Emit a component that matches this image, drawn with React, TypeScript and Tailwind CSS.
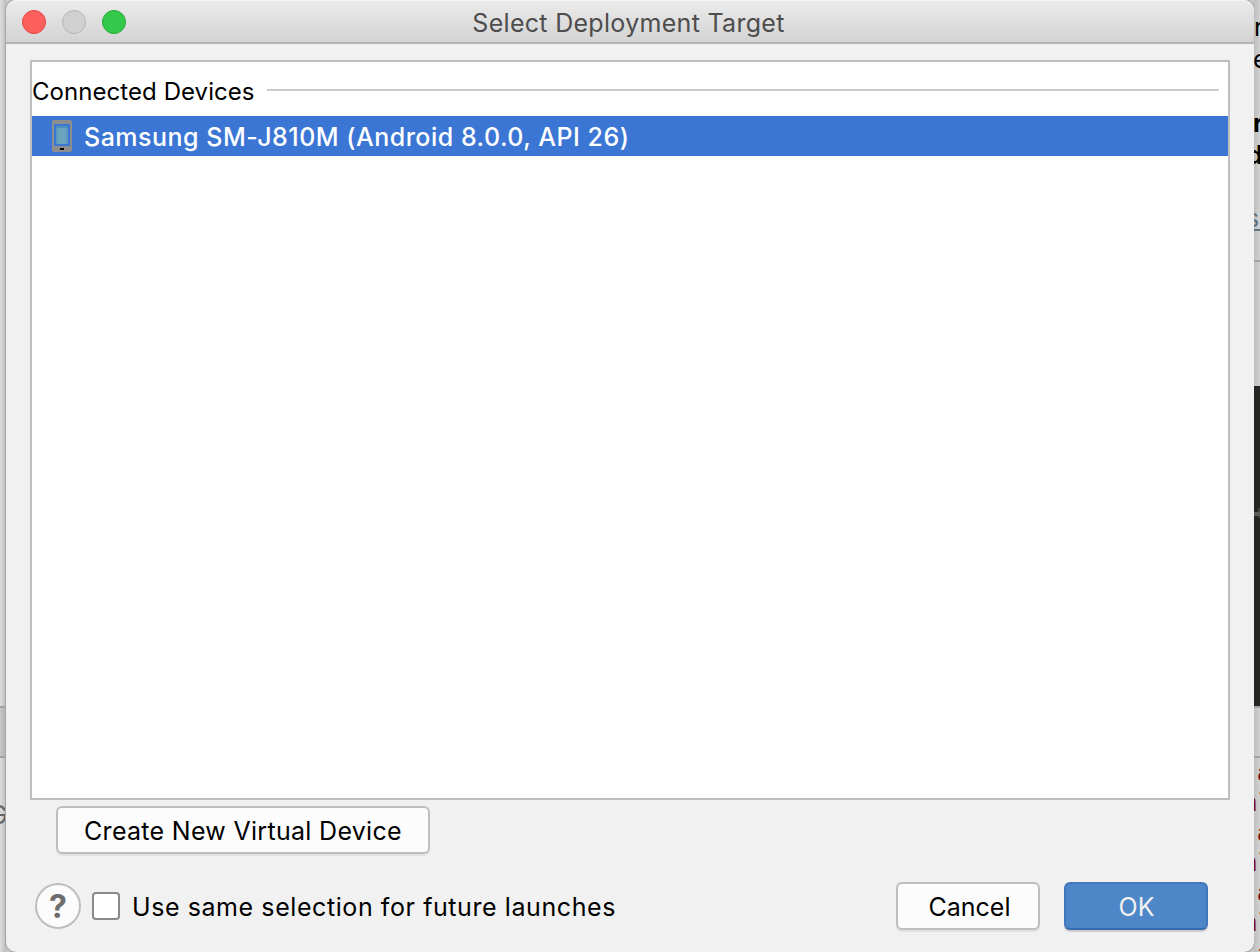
import type { ReactNode } from "react";

function TrafficLights() {
  return (
    <div className="flex w-[120px] gap-4 pl-4">
      <span className="size-6 rounded-full border border-[#e2443f] bg-[#fc605c]" />
      <span className="size-6 rounded-full border border-[#b4b4b4] bg-[#d0d0d0]" />
      <span className="size-6 rounded-full border border-[#27a737] bg-[#34c94a]" />
    </div>
  );
}

function PhoneIcon() {
  return (
    <svg width="20" height="32" viewBox="0 0 20 32" shapeRendering="crispEdges" className="shrink-0">
      <path fill="#8e8e8e" fillRule="evenodd" d="M1 0H19V1H20V31H19V32H1V31H0V1H1ZM2 4V26H18V4Z" />
      <rect x="4" y="6" width="12" height="18" fill="#4c8fbb" />
      <rect x="6" y="8" width="8" height="16" fill="#6ca4bf" />
      <rect x="4" y="8" width="2" height="16" fill="#5c9abf" />
      <rect x="14" y="8" width="2" height="16" fill="#5c9abf" />
      <rect x="8" y="28" width="4" height="2" fill="#000" />
    </svg>
  );
}

function Button({ className, children }: { className: string; children: ReactNode }) {
  return (
    <button
      className={`flex h-12 items-center justify-center rounded-[6px] border-2 whitespace-nowrap ${className}`}
    >
      {children}
    </button>
  );
}

function LeftBackdrop() {
  return (
    <div className="flex flex-col overflow-hidden bg-linear-to-r from-[#dedede] to-[#bdbdbd]">
      <div className="h-[706px] shrink-0" />
      <div className="h-[52px] shrink-0 border-y-2 border-[#a2a2a2] bg-linear-to-r from-[#c8c8c8] to-[#b0b0b0]" />
      <div className="-ml-[11px] mt-[44px] h-[26px] text-[25px] leading-[26px] text-[#666]">G</div>
    </div>
  );
}

function LogFragment() {
  return (
    <div className="h-[60px] shrink-0 font-['Liberation_Mono'] text-[25px] leading-[34px] font-bold text-[#7a0c14]">
      <div className="ml-[3px] h-[30px]">a</div>
      <div className="-ml-[12px] h-[30px] whitespace-nowrap">nl</div>
    </div>
  );
}

function RightBackdrop() {
  return (
    <div className="flex flex-col overflow-hidden bg-linear-to-r from-[#bdbdbd] to-[#d2d2d2] text-[25px] text-black">
      <div className="mt-[11px] h-8 shrink-0 leading-8">r</div>
      <div className="-ml-px h-8 shrink-0 leading-8">e</div>
      <div className="mt-8 -ml-[1px] h-8 shrink-0 leading-8 font-bold">r</div>
      <div className="-ml-[7px] h-8 shrink-0 leading-8 font-bold">d</div>
      <div className="mt-[35px] -ml-[8px] h-[25px] shrink-0 border-b-2 border-[#60727d] leading-[25px] whitespace-nowrap text-[#60727d]">
        so
      </div>
      <div className="mt-[29px] h-[126px] shrink-0 border-t-2 border-[#a2a2a2]" />
      <div className="flex h-[320px] shrink-0 flex-col items-end bg-[#252524] pt-[122px]">
        <div className="h-[4px] w-[2px] bg-[#40403e]" />
        <div className="h-[4px] w-[6px] bg-[#5a5a57]" />
        <div className="h-[2px] w-[2px] bg-[#40403e]" />
      </div>
      <div className="h-[52px] shrink-0 border-y-2 border-[#a2a2a2]" />
      <LogFragment />
      <LogFragment />
      <LogFragment />
      <LogFragment />
    </div>
  );
}

export default function App() {
  return (
    <div className="grid h-[952px] w-[1260px] grid-cols-[6px_1248px_6px] overflow-hidden bg-[#c9c9c9] font-['Inter','Liberation_Sans',sans-serif] text-black">
      <LeftBackdrop />
      <main className="flex flex-col overflow-hidden rounded-[10px] bg-[#f1f1f1] shadow-[0_0_0_1px_#a5a5a5]">
        <header className="flex h-11 shrink-0 items-center border-t border-b-2 border-t-[#f6f6f6] border-b-[#b3b3b3] bg-linear-to-b from-[#ebebeb] to-[#d3d3d3]">
          <TrafficLights />
          <h1 className="flex-1 pt-[2px] pr-[123px] text-center text-[25px] leading-8 tracking-[0.3px] text-[#4d4d4d]">
            Select Deployment Target
          </h1>
        </header>
        <section className="mx-6 mt-4 flex h-[740px] shrink-0 flex-col border-2 border-[#bebebe] bg-white">
          <div className="flex h-[54px] shrink-0 items-center gap-3 pt-[4px] pr-[9px]">
            <h2 className="w-[223px] pt-[2px] text-[24px] leading-8 tracking-[0.06px] whitespace-nowrap">
              Connected Devices
            </h2>
            <div className="mb-[2px] h-[2px] flex-1 bg-[#cbcbcb]" />
          </div>
          <div className="flex h-10 shrink-0 items-center gap-3 bg-[#3b76d4] pl-5 text-white">
            <PhoneIcon />
            <span className="pt-[2px] text-[25px] leading-8 font-medium tracking-[0.5px] whitespace-nowrap">
              Samsung SM-J810M (Android 8.0.0, API 26)
            </span>
          </div>
        </section>
        <div className="mt-[6px] ml-[50px] flex">
          <Button className="w-[374px] border-[#bebebe] bg-[#fcfcfc] pt-[3px] text-[25px] tracking-[0.3px] shadow-[0_2px_0_#e2e2e2]">
            Create New Virtual Device
          </Button>
        </div>
        <footer className="mt-7 flex h-12 items-center pr-[46px] pl-[29px]">
          <button className="flex size-[46px] items-center justify-center rounded-full border-2 border-[#bebebe] bg-[#fcfcfc] pt-px text-[32px] leading-none font-bold text-[#6e6e6e]">
            ?
          </button>
          <span className="ml-[11px] size-7 rounded-[4px] border-2 border-[#8a8a8a] bg-white" />
          <span className="ml-3 flex-1 pt-[2px] text-[25px] leading-8 tracking-[0.58px] whitespace-nowrap">
            Use same selection for future launches
          </span>
          <Button className="mr-6 w-36 border-[#bebebe] bg-[#fcfcfc] pt-[3px] pl-[3px] text-[25px] shadow-[0_2px_0_#e2e2e2]">
            Cancel
          </Button>
          <Button className="w-36 border-[#4077be] border-b-[#346bad] bg-[#4d87c7] pt-[3px] pl-px text-[25px] text-[#f0f0f0] shadow-[0_2px_0_#cdcdcd]">
            OK
          </Button>
        </footer>
      </main>
      <RightBackdrop />
    </div>
  );
}
